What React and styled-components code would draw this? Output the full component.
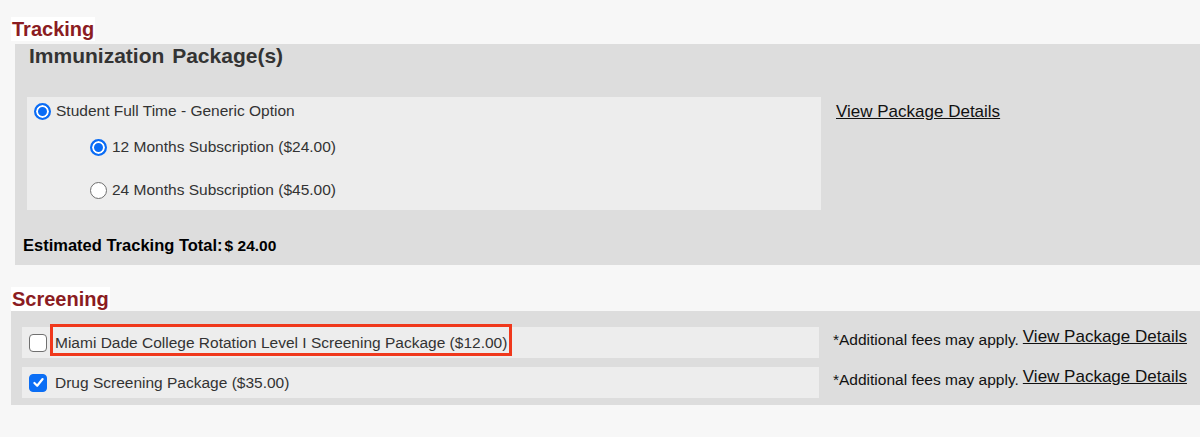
import styled, { createGlobalStyle, css } from 'styled-components';

const GlobalStyle = createGlobalStyle`
  html, body {
    margin: 0;
    padding: 0;
    background: #f7f7f7;
  }
  body {
    font-family: "Liberation Sans", Arial, Helvetica, sans-serif;
  }
`;

const Page = styled.div`
  min-height: 437px;
  padding-top: 17px;
  box-sizing: border-box;
  background: #f7f7f7;
`;

const SectionTitle = styled.div`
  display: inline-block;
  margin: ${p => p.$top || 0}px 0 0 11px;
  padding: 0 1px;
  background: #fff;
  color: #8b1c22;
  font-size: 20px;
  font-weight: bold;
  line-height: 24px;
`;

const Panel = styled.div`
  background: #dddddd;
  margin-left: ${p => p.$left}px;
  margin-top: ${p => p.$top || 0}px;
`;

const PanelHeading = styled.h3`
  margin: 0;
  padding-left: 14px;
  color: #333;
  font-size: 21px;
  font-weight: bold;
  line-height: 24px;
  word-spacing: 2px;
`;

const PackageRow = styled.div`
  display: flex;
  align-items: flex-start;
  margin: 29px 0 0 12px;
`;

const OptionsBox = styled.div`
  width: 794px;
  height: 113px;
  box-sizing: border-box;
  padding: 3px 0 0 7px;
  background: #ededed;
`;

const Option = styled.label`
  display: flex;
  align-items: center;
  gap: 5px;
  height: 22px;
  color: #333;
  font-size: 15.5px;
  line-height: 18px;
`;

const SubOptions = styled.div`
  display: grid;
  gap: 21px;
  margin: 14px 0 0 56px;
`;

const Radio = styled.input.attrs({ type: 'radio' })`
  appearance: none;
  margin: 0;
  width: 17px;
  height: 17px;
  flex: none;
  border-radius: 50%;
  box-sizing: border-box;
  background: #fff;
  border: 1px solid #6f6f6f;

  &:checked {
    border: 2px solid #0a6cf5;
    background: #0a6cf5;
    box-shadow: inset 0 0 0 2px #fff;
  }
`;

const DetailsLink = styled.a`
  display: inline-block;
  margin: ${p => p.$offset || 0}px 0 0 ${p => p.$gap || 0}px;
  color: #111;
  font-size: 17px;
  line-height: 19px;
  text-decoration: underline;
  white-space: nowrap;
  cursor: pointer;
`;

const TotalLine = styled.div`
  margin-top: 26px;
  padding: 0 0 10px 8px;
  color: #000;
  font-size: 16.5px;
  font-weight: bold;
  line-height: 19px;
`;

const Amount = styled.span`
  margin-left: 2px;
  font-size: 15.5px;
`;

const ScreeningList = styled.div`
  display: grid;
  gap: 9px;
  padding: 16px 0 7px 11px;
`;

const ScreeningRow = styled.div`
  display: flex;
  align-items: flex-start;
`;

const RowBox = styled.div`
  display: flex;
  align-items: center;
  width: 797px;
  height: 31px;
  box-sizing: border-box;
  padding-left: 7px;
  background: #ededed;
`;

const Box = styled.span`
  display: grid;
  place-items: center;
  width: 18px;
  height: 18px;
  flex: none;
  box-sizing: border-box;
  border-radius: 4px;
  margin-right: 3px;
  ${p => p.$checked
    ? css`background: #0b6ef5; border: 1px solid #0b6ef5;`
    : css`background: #fff; border: 1px solid #707070;`}
`;

const PackageLabel = styled.span`
  position: relative;
  padding: 0 0 0 5px;
  color: #333;
  font-size: 15.5px;
  line-height: 18px;
  white-space: nowrap;

  ${p => p.$flagged && css`
    &::after {
      content: '';
      position: absolute;
      left: 0;
      right: -5px;
      top: -10px;
      bottom: -4px;
      border: 3px solid #f0381c;
    }
  `}
`;

const RightCell = styled.div`
  display: flex;
  align-items: flex-start;
  margin-left: 14px;
`;

const Fees = styled.span`
  padding-top: 4px;
  color: #111;
  font-size: 15.5px;
  line-height: 18px;
  white-space: nowrap;
`;

function Check({ checked }) {
  return (
    <Box $checked={checked}>
      {checked && (
        <svg width="13" height="13" viewBox="0 0 12 12">
          <path d="M2.2 6.4 L4.8 9 L9.8 2.8" fill="none" stroke="#fff" strokeWidth="2" strokeLinecap="round" strokeLinejoin="round" />
        </svg>
      )}
    </Box>
  );
}

const screenings = [
  { name: 'Miami Dade College Rotation Level I Screening Package ($12.00)', checked: false, flagged: true },
  { name: 'Drug Screening Package ($35.00)', checked: true, flagged: false },
];

export default function App() {
  return (
    <Page>
      <GlobalStyle />
      <SectionTitle>Tracking</SectionTitle>
      <Panel $left={15} $top={3}>
        <PanelHeading>Immunization Package(s)</PanelHeading>
        <PackageRow>
          <OptionsBox>
            <Option>
              <Radio name="pkg" defaultChecked />
              Student Full Time - Generic Option
            </Option>
            <SubOptions>
              <Option>
                <Radio name="term" defaultChecked />
                12 Months Subscription ($24.00)
              </Option>
              <Option>
                <Radio name="term" />
                24 Months Subscription ($45.00)
              </Option>
            </SubOptions>
          </OptionsBox>
          <DetailsLink $offset={5} $gap={15}>View Package Details</DetailsLink>
        </PackageRow>
        <TotalLine>
          Estimated Tracking Total:<Amount>$ 24.00</Amount>
        </TotalLine>
      </Panel>

      <div>
        <SectionTitle $top={22}>Screening</SectionTitle>
      </div>
      <Panel $left={11}>
        <ScreeningList>
          {screenings.map(s => (
            <ScreeningRow key={s.name}>
              <RowBox>
                <Check checked={s.checked} />
                <PackageLabel $flagged={s.flagged}>{s.name}</PackageLabel>
              </RowBox>
              <RightCell>
                <Fees>*Additional fees may apply.</Fees>
                <DetailsLink $gap={4}>View Package Details</DetailsLink>
              </RightCell>
            </ScreeningRow>
          ))}
        </ScreeningList>
      </Panel>
    </Page>
  );
}
